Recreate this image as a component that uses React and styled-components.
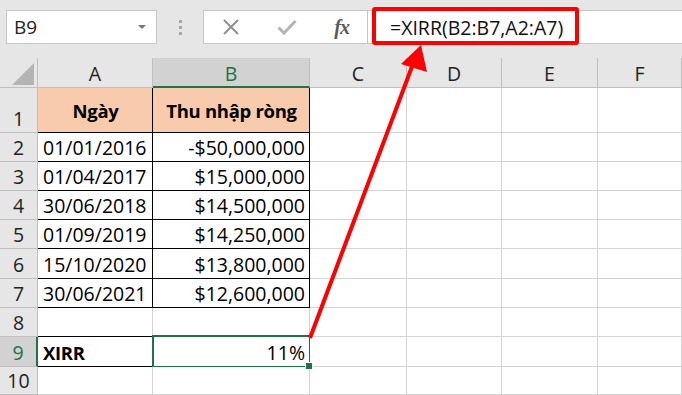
import React from 'react';
import styled, { createGlobalStyle } from 'styled-components';

const GRID = '#d4d4d4';
const HEAD_LINE = '#bfbfbf';
const GREEN = '#217346';
const FONT = '"Open Sans", "Liberation Sans", sans-serif';

const GlobalStyle = createGlobalStyle`
  html, body {
    margin: 0;
    padding: 0;
    background: #ffffff;
    overflow: hidden;
  }
  body {
    font-family: ${FONT};
  }
`;

const rows = [
  { n: 1, h: 45, a: 'Ngày', b: 'Thu nhập ròng', head: true },
  { n: 2, h: 29, a: '01/01/2016', b: '-$50,000,000' },
  { n: 3, h: 29, a: '01/04/2017', b: '$15,000,000' },
  { n: 4, h: 29, a: '30/06/2018', b: '$14,500,000' },
  { n: 5, h: 29, a: '01/09/2019', b: '$14,250,000' },
  { n: 6, h: 30, a: '15/10/2020', b: '$13,800,000' },
  { n: 7, h: 29, a: '30/06/2021', b: '$12,600,000' },
  { n: 8, h: 29 },
  { n: 9, h: 30, a: 'XIRR', b: '11%', result: true },
  { n: 10, h: 28 },
];

const columns = ['A', 'B', 'C', 'D', 'E', 'F'];

export default function App() {
  return (
    <Page>
      <GlobalStyle />
      <FormulaBar>
        <NameBox>
          <span>B9</span>
          <DropArrow />
        </NameBox>
        <Grip>
          <i />
          <i />
          <i />
        </Grip>
        <ButtonBox>
          <svg width="18" height="16" viewBox="0 0 18 16">
            <path d="M2 1 L16 15 M16 1 L2 15" stroke="#8f8f8f" strokeWidth="2" fill="none" />
          </svg>
          <svg width="20" height="16" viewBox="0 0 20 16">
            <path d="M1.5 8.5 L7 14 L18.5 2" stroke="#b4b4b4" strokeWidth="3" fill="none" />
          </svg>
          <Fx>fx</Fx>
        </ButtonBox>
        <FormulaInput>=XIRR(B2:B7,A2:A7)</FormulaInput>
      </FormulaBar>

      <Sheet $rows={rows.map((r) => `${r.h}px`).join(' ')}>
        <Corner>
          <svg width="24" height="24" viewBox="0 0 24 24">
            <polygon points="23,1 23,23 1,23" fill="#b4b4b4" />
          </svg>
        </Corner>
        {columns.map((c) => (
          <ColHead key={c} $active={c === 'B'}>{c}</ColHead>
        ))}

        {rows.map((r) => (
          <React.Fragment key={r.n}>
            <RowHead $active={r.result}>{r.n}</RowHead>
            <Cell
              $fill={r.head ? '#f8cbad' : null}
              $bold={r.head || r.result}
              $align={r.head ? 'center' : 'left'}
              $right={r.n <= 7 || r.result ? '#000' : GRID}
              $bottom={r.n <= 9 && r.n !== 7 || r.n === 7 ? '#000' : GRID}
              $middle={r.head}
            >
              {r.a}
            </Cell>
            <Cell
              $fill={r.head ? '#f8cbad' : null}
              $bold={r.head}
              $align={r.head ? 'center' : 'right'}
              $right={r.n <= 7 ? '#000' : GRID}
              $bottom={r.n <= 7 ? '#000' : GRID}
              $middle={r.head}
              $selected={r.result}
            >
              {r.b}
            </Cell>
            <Cell />
            <Cell />
            <Cell />
            <Cell />
          </React.Fragment>
        ))}
      </Sheet>

      <Callout />
      <Arrow width="682" height="395" viewBox="0 0 682 395">
        <line x1="310" y1="338" x2="413" y2="64" stroke="#ff0000" strokeWidth="4" />
        <polygon points="421,45 401,64 427,72" fill="#ff0000" />
      </Arrow>
    </Page>
  );
}

const Page = styled.div`
  position: relative;
  width: 682px;
  height: 395px;
  overflow: hidden;
  background: #ffffff;
  font-family: ${FONT};
`;

const FormulaBar = styled.div`
  display: flex;
  align-items: center;
  height: 58px;
  padding: 0 0 4px 6px;
  box-sizing: border-box;
  background: #e6e6e6;
`;

const NameBox = styled.div`
  display: flex;
  align-items: center;
  justify-content: space-between;
  width: 151px;
  height: 34px;
  box-sizing: border-box;
  padding: 0 10px 0 7px;
  background: #ffffff;
  border: 1px solid #c6c6c6;
  font-size: 19px;
  color: #222;
`;

const DropArrow = styled.span`
  width: 0;
  height: 0;
  border-left: 4px solid transparent;
  border-right: 4px solid transparent;
  border-top: 4px solid #777;
`;

const Grip = styled.div`
  display: flex;
  flex-direction: column;
  gap: 3px;
  width: 46px;
  align-items: center;

  i {
    display: block;
    width: 3px;
    height: 3px;
    background: #a6a6a6;
  }
`;

const ButtonBox = styled.div`
  display: flex;
  align-items: center;
  justify-content: space-between;
  width: 164px;
  height: 34px;
  box-sizing: border-box;
  padding: 0 18px 0 18px;
  background: #ffffff;
  border: 1px solid #c6c6c6;
  border-right: none;
`;

const Fx = styled.span`
  font-family: "Liberation Serif", "DejaVu Serif", serif;
  font-style: italic;
  font-weight: bold;
  font-size: 20px;
  color: #5a5a5a;
  letter-spacing: -1px;
`;

const FormulaInput = styled.div`
  flex: 1;
  display: flex;
  align-items: center;
  height: 34px;
  box-sizing: border-box;
  padding-left: 22px;
  background: #ffffff;
  border: 1px solid #c6c6c6;
  border-right: none;
  font-size: 19.5px;
  color: #111;
`;

const Sheet = styled.div`
  display: grid;
  grid-template-columns: 38px 115px 157px 97px 95px 96px 1fr;
  grid-template-rows: 30px ${(p) => p.$rows};
`;

const Corner = styled.div`
  display: flex;
  align-items: flex-end;
  justify-content: flex-end;
  padding: 0 2px 1px 0;
  background: #e6e6e6;
  border-right: 1px solid ${HEAD_LINE};
  border-bottom: 1px solid ${HEAD_LINE};
`;

const ColHead = styled.div`
  display: flex;
  align-items: center;
  justify-content: center;
  padding-top: 2px;
  font-size: 19.5px;
  color: ${(p) => (p.$active ? GREEN : '#222')};
  background: ${(p) => (p.$active ? '#d2d2d2' : '#e6e6e6')};
  border-right: 1px solid ${HEAD_LINE};
  border-bottom: ${(p) => (p.$active ? `2px solid ${GREEN}` : `1px solid ${HEAD_LINE}`)};
`;

const RowHead = styled.div`
  display: flex;
  align-items: flex-end;
  justify-content: center;
  font-size: 19.5px;
  line-height: 27px;
  color: ${(p) => (p.$active ? GREEN : '#222')};
  background: ${(p) => (p.$active ? '#d2d2d2' : '#e6e6e6')};
  border-right: ${(p) => (p.$active ? `2px solid ${GREEN}` : `1px solid ${HEAD_LINE}`)};
  border-bottom: 1px solid ${HEAD_LINE};
`;

const Cell = styled.div`
  position: relative;
  display: flex;
  align-items: ${(p) => (p.$middle ? 'center' : 'flex-end')};
  justify-content: ${(p) => (p.$align === 'right' ? 'flex-end' : p.$align === 'center' ? 'center' : 'flex-start')};
  padding: 0 4px 0 5px;
  line-height: 27px;
  font-size: ${(p) => (p.$bold ? '18.5px' : '19.5px')};
  letter-spacing: ${(p) => (p.$bold ? '-0.3px' : 'normal')};
  font-weight: ${(p) => (p.$bold ? 700 : 400)};
  color: #000;
  white-space: nowrap;
  background: ${(p) => p.$fill || '#ffffff'};
  border-right: 1px solid ${(p) => p.$right || GRID};
  border-bottom: 1px solid ${(p) => p.$bottom || GRID};

  ${(p) => p.$selected && `
    &::after {
      content: '';
      position: absolute;
      left: -1px;
      top: -2px;
      right: -2px;
      bottom: -2px;
      border: 2px solid ${GREEN};
    }
    &::before {
      content: '';
      position: absolute;
      right: -4px;
      bottom: -4px;
      width: 6px;
      height: 6px;
      background: ${GREEN};
      border: 1px solid #ffffff;
      z-index: 1;
    }
  `}
`;

const Callout = styled.div`
  position: absolute;
  left: 372px;
  top: 7px;
  width: 207px;
  height: 38px;
  box-sizing: border-box;
  border: 4px solid #ff0000;
  border-radius: 3px;
`;

const Arrow = styled.svg`
  position: absolute;
  left: 0;
  top: 0;
  pointer-events: none;
`;
